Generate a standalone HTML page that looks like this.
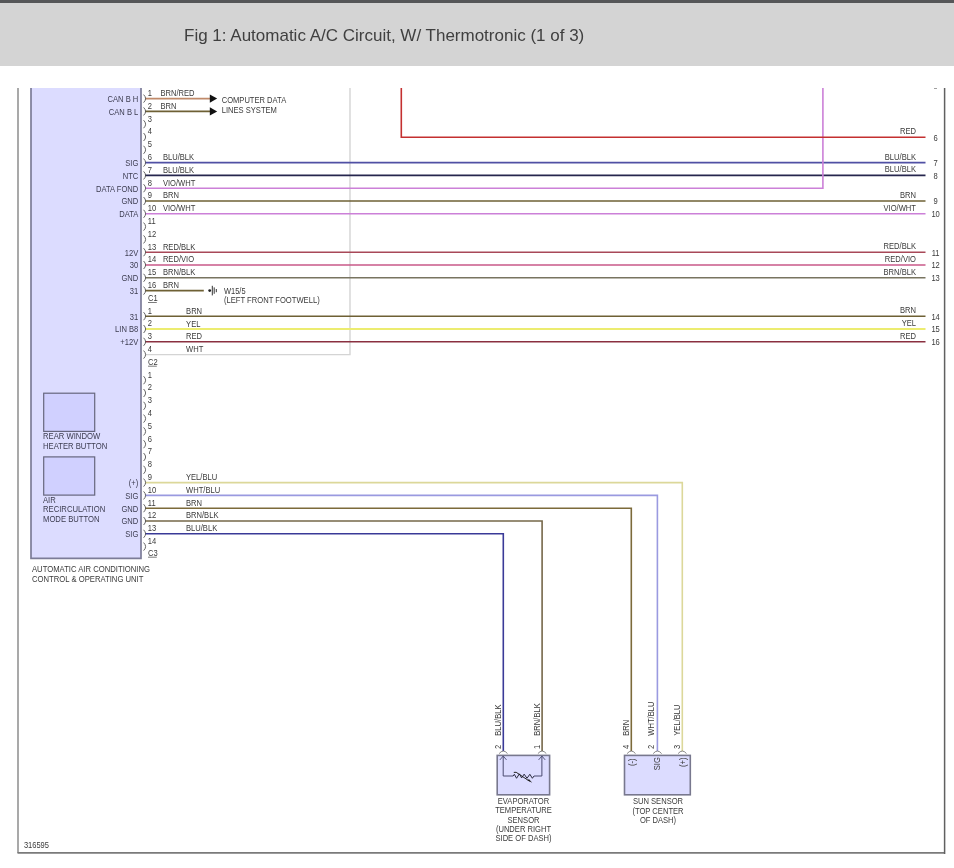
<!DOCTYPE html>
<html><head><meta charset="utf-8"><style>
html,body{margin:0;padding:0;background:#fff;width:954px;height:868px;overflow:hidden}
.hdr{position:absolute;left:0;top:0;width:954px;height:66px;background:#d4d4d4;border-top:3px solid #555658;box-sizing:border-box}
.hdr span{position:absolute;left:184px;top:22.8px;will-change:transform;font:17px "Liberation Sans",sans-serif;color:#404040;white-space:nowrap}
svg{position:absolute;left:0;top:0;will-change:transform}
text{font-family:"Liberation Sans",sans-serif}
</style></head><body>
<div class="hdr"><span>Fig 1: Automatic A/C Circuit, W/ Thermotronic (1 of 3)</span></div>
<svg width="954" height="868" viewBox="0 0 954 868">
<line x1="18.0" y1="88.0" x2="18.0" y2="853.0" stroke="#a0a0a0" stroke-width="1.8"/>
<line x1="17.5" y1="852.9" x2="944.6" y2="852.9" stroke="#7a7a7a" stroke-width="1.6"/>
<line x1="944.6" y1="88.0" x2="944.6" y2="853.9" stroke="#606060" stroke-width="1.5"/>
<polyline points="350.0,88.0 350.0,354.6 145.0,354.6" fill="none" stroke="#d4d4d4" stroke-width="1.4" stroke-linejoin="miter"/>
<path d="M31,88 V558.4 H141 V88" fill="#dcdcff" stroke="#7c7c98" stroke-width="1.7"/>
<rect x="43.7" y="393.2" width="51.0" height="38.2" fill="#d0d0ff" stroke="#66667e" stroke-width="1.2"/>
<rect x="43.7" y="456.9" width="51.0" height="38.2" fill="#d0d0ff" stroke="#66667e" stroke-width="1.2"/>
<line x1="145.0" y1="98.6" x2="210.0" y2="98.6" stroke="#c08a6a" stroke-width="1.6"/>
<line x1="145.0" y1="111.4" x2="210.0" y2="111.4" stroke="#6e6034" stroke-width="1.6"/>
<line x1="145.0" y1="162.6" x2="925.5" y2="162.6" stroke="#5050a4" stroke-width="1.6"/>
<line x1="145.0" y1="175.4" x2="925.5" y2="175.4" stroke="#26264e" stroke-width="1.6"/>
<polyline points="145.0,188.2 822.9,188.2 822.9,88.0" fill="none" stroke="#cc80d8" stroke-width="1.6" stroke-linejoin="miter"/>
<line x1="145.0" y1="201.0" x2="925.5" y2="201.0" stroke="#6e6034" stroke-width="1.6"/>
<line x1="145.0" y1="213.8" x2="925.5" y2="213.8" stroke="#cc80d8" stroke-width="1.6"/>
<line x1="145.0" y1="252.2" x2="925.5" y2="252.2" stroke="#a84858" stroke-width="1.6"/>
<line x1="145.0" y1="265.0" x2="925.5" y2="265.0" stroke="#c85888" stroke-width="1.6"/>
<line x1="145.0" y1="277.8" x2="925.5" y2="277.8" stroke="#787460" stroke-width="1.6"/>
<line x1="145.0" y1="290.6" x2="203.8" y2="290.6" stroke="#6e6034" stroke-width="1.6"/>
<polyline points="401.3,88.0 401.3,137.3 925.5,137.3" fill="none" stroke="#c43030" stroke-width="1.6" stroke-linejoin="miter"/>
<line x1="145.0" y1="316.2" x2="925.5" y2="316.2" stroke="#6e6034" stroke-width="1.6"/>
<line x1="145.0" y1="329.0" x2="925.5" y2="329.0" stroke="#ecec70" stroke-width="1.9"/>
<line x1="145.0" y1="341.8" x2="925.5" y2="341.8" stroke="#8a3040" stroke-width="1.6"/>
<polyline points="145.0,482.6 682.3,482.6 682.3,751.0" fill="none" stroke="#dcd89a" stroke-width="1.6" stroke-linejoin="miter"/>
<polyline points="145.0,495.4 657.4,495.4 657.4,751.0" fill="none" stroke="#9a9ae0" stroke-width="1.6" stroke-linejoin="miter"/>
<polyline points="145.0,508.2 631.3,508.2 631.3,751.0" fill="none" stroke="#7c6a3a" stroke-width="1.6" stroke-linejoin="miter"/>
<polyline points="145.0,521.0 542.1,521.0 542.1,751.0" fill="none" stroke="#76684a" stroke-width="1.6" stroke-linejoin="miter"/>
<polyline points="145.0,533.8 503.3,533.8 503.3,751.0" fill="none" stroke="#3a3a98" stroke-width="1.6" stroke-linejoin="miter"/>
<polygon points="209.8,94.4 217.2,98.6 209.8,102.8" fill="#111"/>
<polygon points="209.8,107.2 217.2,111.4 209.8,115.6" fill="#111"/>
<text x="221.7" y="102.9" font-size="8.2" fill="#3a3a3a" text-anchor="start" textLength="64.50" lengthAdjust="spacingAndGlyphs">COMPUTER DATA</text>
<text x="221.7" y="112.7" font-size="8.2" fill="#3a3a3a" text-anchor="start" textLength="55.22" lengthAdjust="spacingAndGlyphs">LINES SYSTEM</text>
<circle cx="209.7" cy="290.6" r="1.4" fill="#222"/>
<line x1="212.3" y1="285.8" x2="212.3" y2="295.4" stroke="#333" stroke-width="1.0"/>
<line x1="214.2" y1="287.4" x2="214.2" y2="293.8" stroke="#333" stroke-width="1.0"/>
<line x1="216.3" y1="289.0" x2="216.3" y2="292.2" stroke="#333" stroke-width="1.0"/>
<text x="224.0" y="293.5" font-size="8.2" fill="#3a3a3a" text-anchor="start" textLength="21.60" lengthAdjust="spacingAndGlyphs">W15/5</text>
<text x="224.0" y="302.7" font-size="8.2" fill="#3a3a3a" text-anchor="start" textLength="95.70" lengthAdjust="spacingAndGlyphs">(LEFT FRONT FOOTWELL)</text>
<path d="M143.6,94.6 Q147.6,98.6 143.6,102.6" fill="none" stroke="#555" stroke-width="0.9"/>
<text x="147.8" y="96.0" font-size="8.2" fill="#3a3a3a" text-anchor="start" textLength="4.22" lengthAdjust="spacingAndGlyphs">1</text>
<path d="M143.6,107.4 Q147.6,111.4 143.6,115.4" fill="none" stroke="#555" stroke-width="0.9"/>
<text x="147.8" y="108.8" font-size="8.2" fill="#3a3a3a" text-anchor="start" textLength="4.22" lengthAdjust="spacingAndGlyphs">2</text>
<path d="M143.6,120.2 Q147.6,124.2 143.6,128.2" fill="none" stroke="#555" stroke-width="0.9"/>
<text x="147.8" y="121.6" font-size="8.2" fill="#3a3a3a" text-anchor="start" textLength="4.22" lengthAdjust="spacingAndGlyphs">3</text>
<path d="M143.6,133.0 Q147.6,137.0 143.6,141.0" fill="none" stroke="#555" stroke-width="0.9"/>
<text x="147.8" y="134.4" font-size="8.2" fill="#3a3a3a" text-anchor="start" textLength="4.22" lengthAdjust="spacingAndGlyphs">4</text>
<path d="M143.6,145.8 Q147.6,149.8 143.6,153.8" fill="none" stroke="#555" stroke-width="0.9"/>
<text x="147.8" y="147.2" font-size="8.2" fill="#3a3a3a" text-anchor="start" textLength="4.22" lengthAdjust="spacingAndGlyphs">5</text>
<path d="M143.6,158.6 Q147.6,162.6 143.6,166.6" fill="none" stroke="#555" stroke-width="0.9"/>
<text x="147.8" y="160.0" font-size="8.2" fill="#3a3a3a" text-anchor="start" textLength="4.22" lengthAdjust="spacingAndGlyphs">6</text>
<path d="M143.6,171.4 Q147.6,175.4 143.6,179.4" fill="none" stroke="#555" stroke-width="0.9"/>
<text x="147.8" y="172.8" font-size="8.2" fill="#3a3a3a" text-anchor="start" textLength="4.22" lengthAdjust="spacingAndGlyphs">7</text>
<path d="M143.6,184.2 Q147.6,188.2 143.6,192.2" fill="none" stroke="#555" stroke-width="0.9"/>
<text x="147.8" y="185.6" font-size="8.2" fill="#3a3a3a" text-anchor="start" textLength="4.22" lengthAdjust="spacingAndGlyphs">8</text>
<path d="M143.6,197.0 Q147.6,201.0 143.6,205.0" fill="none" stroke="#555" stroke-width="0.9"/>
<text x="147.8" y="198.4" font-size="8.2" fill="#3a3a3a" text-anchor="start" textLength="4.22" lengthAdjust="spacingAndGlyphs">9</text>
<path d="M143.6,209.8 Q147.6,213.8 143.6,217.8" fill="none" stroke="#555" stroke-width="0.9"/>
<text x="147.8" y="211.2" font-size="8.2" fill="#3a3a3a" text-anchor="start" textLength="8.44" lengthAdjust="spacingAndGlyphs">10</text>
<path d="M143.6,222.6 Q147.6,226.6 143.6,230.6" fill="none" stroke="#555" stroke-width="0.9"/>
<text x="147.8" y="224.0" font-size="8.2" fill="#3a3a3a" text-anchor="start" textLength="7.87" lengthAdjust="spacingAndGlyphs">11</text>
<path d="M143.6,235.4 Q147.6,239.4 143.6,243.4" fill="none" stroke="#555" stroke-width="0.9"/>
<text x="147.8" y="236.8" font-size="8.2" fill="#3a3a3a" text-anchor="start" textLength="8.44" lengthAdjust="spacingAndGlyphs">12</text>
<path d="M143.6,248.2 Q147.6,252.2 143.6,256.2" fill="none" stroke="#555" stroke-width="0.9"/>
<text x="147.8" y="249.6" font-size="8.2" fill="#3a3a3a" text-anchor="start" textLength="8.44" lengthAdjust="spacingAndGlyphs">13</text>
<path d="M143.6,261.0 Q147.6,265.0 143.6,269.0" fill="none" stroke="#555" stroke-width="0.9"/>
<text x="147.8" y="262.4" font-size="8.2" fill="#3a3a3a" text-anchor="start" textLength="8.44" lengthAdjust="spacingAndGlyphs">14</text>
<path d="M143.6,273.8 Q147.6,277.8 143.6,281.8" fill="none" stroke="#555" stroke-width="0.9"/>
<text x="147.8" y="275.2" font-size="8.2" fill="#3a3a3a" text-anchor="start" textLength="8.44" lengthAdjust="spacingAndGlyphs">15</text>
<path d="M143.6,286.6 Q147.6,290.6 143.6,294.6" fill="none" stroke="#555" stroke-width="0.9"/>
<text x="147.8" y="288.0" font-size="8.2" fill="#3a3a3a" text-anchor="start" textLength="8.44" lengthAdjust="spacingAndGlyphs">16</text>
<path d="M143.6,312.2 Q147.6,316.2 143.6,320.2" fill="none" stroke="#555" stroke-width="0.9"/>
<text x="147.8" y="313.6" font-size="8.2" fill="#3a3a3a" text-anchor="start" textLength="4.22" lengthAdjust="spacingAndGlyphs">1</text>
<path d="M143.6,325.0 Q147.6,329.0 143.6,333.0" fill="none" stroke="#555" stroke-width="0.9"/>
<text x="147.8" y="326.4" font-size="8.2" fill="#3a3a3a" text-anchor="start" textLength="4.22" lengthAdjust="spacingAndGlyphs">2</text>
<path d="M143.6,337.8 Q147.6,341.8 143.6,345.8" fill="none" stroke="#555" stroke-width="0.9"/>
<text x="147.8" y="339.2" font-size="8.2" fill="#3a3a3a" text-anchor="start" textLength="4.22" lengthAdjust="spacingAndGlyphs">3</text>
<path d="M143.6,350.6 Q147.6,354.6 143.6,358.6" fill="none" stroke="#555" stroke-width="0.9"/>
<text x="147.8" y="352.0" font-size="8.2" fill="#3a3a3a" text-anchor="start" textLength="4.22" lengthAdjust="spacingAndGlyphs">4</text>
<path d="M143.6,376.2 Q147.6,380.2 143.6,384.2" fill="none" stroke="#555" stroke-width="0.9"/>
<text x="147.8" y="377.6" font-size="8.2" fill="#3a3a3a" text-anchor="start" textLength="4.22" lengthAdjust="spacingAndGlyphs">1</text>
<path d="M143.6,389.0 Q147.6,393.0 143.6,397.0" fill="none" stroke="#555" stroke-width="0.9"/>
<text x="147.8" y="390.4" font-size="8.2" fill="#3a3a3a" text-anchor="start" textLength="4.22" lengthAdjust="spacingAndGlyphs">2</text>
<path d="M143.6,401.8 Q147.6,405.8 143.6,409.8" fill="none" stroke="#555" stroke-width="0.9"/>
<text x="147.8" y="403.2" font-size="8.2" fill="#3a3a3a" text-anchor="start" textLength="4.22" lengthAdjust="spacingAndGlyphs">3</text>
<path d="M143.6,414.6 Q147.6,418.6 143.6,422.6" fill="none" stroke="#555" stroke-width="0.9"/>
<text x="147.8" y="416.0" font-size="8.2" fill="#3a3a3a" text-anchor="start" textLength="4.22" lengthAdjust="spacingAndGlyphs">4</text>
<path d="M143.6,427.4 Q147.6,431.4 143.6,435.4" fill="none" stroke="#555" stroke-width="0.9"/>
<text x="147.8" y="428.8" font-size="8.2" fill="#3a3a3a" text-anchor="start" textLength="4.22" lengthAdjust="spacingAndGlyphs">5</text>
<path d="M143.6,440.2 Q147.6,444.2 143.6,448.2" fill="none" stroke="#555" stroke-width="0.9"/>
<text x="147.8" y="441.6" font-size="8.2" fill="#3a3a3a" text-anchor="start" textLength="4.22" lengthAdjust="spacingAndGlyphs">6</text>
<path d="M143.6,453.0 Q147.6,457.0 143.6,461.0" fill="none" stroke="#555" stroke-width="0.9"/>
<text x="147.8" y="454.4" font-size="8.2" fill="#3a3a3a" text-anchor="start" textLength="4.22" lengthAdjust="spacingAndGlyphs">7</text>
<path d="M143.6,465.8 Q147.6,469.8 143.6,473.8" fill="none" stroke="#555" stroke-width="0.9"/>
<text x="147.8" y="467.2" font-size="8.2" fill="#3a3a3a" text-anchor="start" textLength="4.22" lengthAdjust="spacingAndGlyphs">8</text>
<path d="M143.6,478.6 Q147.6,482.6 143.6,486.6" fill="none" stroke="#555" stroke-width="0.9"/>
<text x="147.8" y="480.0" font-size="8.2" fill="#3a3a3a" text-anchor="start" textLength="4.22" lengthAdjust="spacingAndGlyphs">9</text>
<path d="M143.6,491.4 Q147.6,495.4 143.6,499.4" fill="none" stroke="#555" stroke-width="0.9"/>
<text x="147.8" y="492.8" font-size="8.2" fill="#3a3a3a" text-anchor="start" textLength="8.44" lengthAdjust="spacingAndGlyphs">10</text>
<path d="M143.6,504.2 Q147.6,508.2 143.6,512.2" fill="none" stroke="#555" stroke-width="0.9"/>
<text x="147.8" y="505.6" font-size="8.2" fill="#3a3a3a" text-anchor="start" textLength="7.87" lengthAdjust="spacingAndGlyphs">11</text>
<path d="M143.6,517.0 Q147.6,521.0 143.6,525.0" fill="none" stroke="#555" stroke-width="0.9"/>
<text x="147.8" y="518.4" font-size="8.2" fill="#3a3a3a" text-anchor="start" textLength="8.44" lengthAdjust="spacingAndGlyphs">12</text>
<path d="M143.6,529.8 Q147.6,533.8 143.6,537.8" fill="none" stroke="#555" stroke-width="0.9"/>
<text x="147.8" y="531.2" font-size="8.2" fill="#3a3a3a" text-anchor="start" textLength="8.44" lengthAdjust="spacingAndGlyphs">13</text>
<path d="M143.6,542.6 Q147.6,546.6 143.6,550.6" fill="none" stroke="#555" stroke-width="0.9"/>
<text x="147.8" y="544.0" font-size="8.2" fill="#3a3a3a" text-anchor="start" textLength="8.44" lengthAdjust="spacingAndGlyphs">14</text>
<text x="148.0" y="301.3" font-size="8.2" fill="#3a3a3a" text-anchor="start" textLength="9.70" lengthAdjust="spacingAndGlyphs">C1</text>
<line x1="148.0" y1="302.5" x2="156.8" y2="302.5" stroke="#444" stroke-width="0.7"/>
<text x="148.0" y="365.0" font-size="8.2" fill="#3a3a3a" text-anchor="start" textLength="9.70" lengthAdjust="spacingAndGlyphs">C2</text>
<line x1="148.0" y1="366.2" x2="156.8" y2="366.2" stroke="#444" stroke-width="0.7"/>
<text x="148.0" y="556.0" font-size="8.2" fill="#3a3a3a" text-anchor="start" textLength="9.70" lengthAdjust="spacingAndGlyphs">C3</text>
<line x1="148.0" y1="557.2" x2="156.8" y2="557.2" stroke="#444" stroke-width="0.7"/>
<text x="160.4" y="95.9" font-size="8.2" fill="#3a3a3a" text-anchor="start" textLength="34.14" lengthAdjust="spacingAndGlyphs">BRN/RED</text>
<text x="160.4" y="108.7" font-size="8.2" fill="#3a3a3a" text-anchor="start" textLength="16.01" lengthAdjust="spacingAndGlyphs">BRN</text>
<text x="162.9" y="159.9" font-size="8.2" fill="#3a3a3a" text-anchor="start" textLength="31.20" lengthAdjust="spacingAndGlyphs">BLU/BLK</text>
<text x="162.9" y="172.7" font-size="8.2" fill="#3a3a3a" text-anchor="start" textLength="31.20" lengthAdjust="spacingAndGlyphs">BLU/BLK</text>
<text x="162.9" y="185.5" font-size="8.2" fill="#3a3a3a" text-anchor="start" textLength="32.44" lengthAdjust="spacingAndGlyphs">VIO/WHT</text>
<text x="162.9" y="198.3" font-size="8.2" fill="#3a3a3a" text-anchor="start" textLength="16.01" lengthAdjust="spacingAndGlyphs">BRN</text>
<text x="162.9" y="211.1" font-size="8.2" fill="#3a3a3a" text-anchor="start" textLength="32.44" lengthAdjust="spacingAndGlyphs">VIO/WHT</text>
<text x="162.9" y="249.5" font-size="8.2" fill="#3a3a3a" text-anchor="start" textLength="32.46" lengthAdjust="spacingAndGlyphs">RED/BLK</text>
<text x="162.9" y="262.3" font-size="8.2" fill="#3a3a3a" text-anchor="start" textLength="31.19" lengthAdjust="spacingAndGlyphs">RED/VIO</text>
<text x="162.9" y="275.1" font-size="8.2" fill="#3a3a3a" text-anchor="start" textLength="32.46" lengthAdjust="spacingAndGlyphs">BRN/BLK</text>
<text x="162.9" y="287.9" font-size="8.2" fill="#3a3a3a" text-anchor="start" textLength="16.01" lengthAdjust="spacingAndGlyphs">BRN</text>
<text x="186.1" y="313.7" font-size="8.2" fill="#3a3a3a" text-anchor="start" textLength="16.01" lengthAdjust="spacingAndGlyphs">BRN</text>
<text x="186.1" y="326.5" font-size="8.2" fill="#3a3a3a" text-anchor="start" textLength="14.34" lengthAdjust="spacingAndGlyphs">YEL</text>
<text x="186.1" y="339.3" font-size="8.2" fill="#3a3a3a" text-anchor="start" textLength="16.01" lengthAdjust="spacingAndGlyphs">RED</text>
<text x="186.1" y="352.1" font-size="8.2" fill="#3a3a3a" text-anchor="start" textLength="17.27" lengthAdjust="spacingAndGlyphs">WHT</text>
<text x="186.0" y="479.9" font-size="8.2" fill="#3a3a3a" text-anchor="start" textLength="31.20" lengthAdjust="spacingAndGlyphs">YEL/BLU</text>
<text x="186.0" y="492.7" font-size="8.2" fill="#3a3a3a" text-anchor="start" textLength="34.13" lengthAdjust="spacingAndGlyphs">WHT/BLU</text>
<text x="186.0" y="505.5" font-size="8.2" fill="#3a3a3a" text-anchor="start" textLength="16.01" lengthAdjust="spacingAndGlyphs">BRN</text>
<text x="186.0" y="518.3" font-size="8.2" fill="#3a3a3a" text-anchor="start" textLength="32.46" lengthAdjust="spacingAndGlyphs">BRN/BLK</text>
<text x="186.0" y="531.1" font-size="8.2" fill="#3a3a3a" text-anchor="start" textLength="31.20" lengthAdjust="spacingAndGlyphs">BLU/BLK</text>
<text x="138.3" y="102.0" font-size="8.2" fill="#3c3c50" text-anchor="end" textLength="30.77" lengthAdjust="spacingAndGlyphs">CAN B H</text>
<text x="138.3" y="114.8" font-size="8.2" fill="#3c3c50" text-anchor="end" textLength="29.51" lengthAdjust="spacingAndGlyphs">CAN B L</text>
<text x="138.3" y="166.0" font-size="8.2" fill="#3c3c50" text-anchor="end" textLength="13.07" lengthAdjust="spacingAndGlyphs">SIG</text>
<text x="138.3" y="178.8" font-size="8.2" fill="#3c3c50" text-anchor="end" textLength="15.59" lengthAdjust="spacingAndGlyphs">NTC</text>
<text x="138.3" y="191.6" font-size="8.2" fill="#3c3c50" text-anchor="end" textLength="42.28" lengthAdjust="spacingAndGlyphs">DATA FOND</text>
<text x="138.3" y="204.4" font-size="8.2" fill="#3c3c50" text-anchor="end" textLength="16.86" lengthAdjust="spacingAndGlyphs">GND</text>
<text x="138.3" y="217.2" font-size="8.2" fill="#3c3c50" text-anchor="end" textLength="19.10" lengthAdjust="spacingAndGlyphs">DATA</text>
<text x="138.3" y="255.6" font-size="8.2" fill="#3c3c50" text-anchor="end" textLength="13.50" lengthAdjust="spacingAndGlyphs">12V</text>
<text x="138.3" y="268.4" font-size="8.2" fill="#3c3c50" text-anchor="end" textLength="8.44" lengthAdjust="spacingAndGlyphs">30</text>
<text x="138.3" y="281.2" font-size="8.2" fill="#3c3c50" text-anchor="end" textLength="16.86" lengthAdjust="spacingAndGlyphs">GND</text>
<text x="138.3" y="294.0" font-size="8.2" fill="#3c3c50" text-anchor="end" textLength="8.44" lengthAdjust="spacingAndGlyphs">31</text>
<text x="138.3" y="319.6" font-size="8.2" fill="#3c3c50" text-anchor="end" textLength="8.44" lengthAdjust="spacingAndGlyphs">31</text>
<text x="138.3" y="332.4" font-size="8.2" fill="#3c3c50" text-anchor="end" textLength="23.19" lengthAdjust="spacingAndGlyphs">LIN B8</text>
<text x="138.3" y="345.2" font-size="8.2" fill="#3c3c50" text-anchor="end" textLength="17.93" lengthAdjust="spacingAndGlyphs">+12V</text>
<text x="138.3" y="486.0" font-size="8.2" fill="#3c3c50" text-anchor="end" textLength="9.48" lengthAdjust="spacingAndGlyphs">(+)</text>
<text x="138.3" y="498.8" font-size="8.2" fill="#3c3c50" text-anchor="end" textLength="13.07" lengthAdjust="spacingAndGlyphs">SIG</text>
<text x="138.3" y="511.6" font-size="8.2" fill="#3c3c50" text-anchor="end" textLength="16.86" lengthAdjust="spacingAndGlyphs">GND</text>
<text x="138.3" y="524.4" font-size="8.2" fill="#3c3c50" text-anchor="end" textLength="16.86" lengthAdjust="spacingAndGlyphs">GND</text>
<text x="138.3" y="537.2" font-size="8.2" fill="#3c3c50" text-anchor="end" textLength="13.07" lengthAdjust="spacingAndGlyphs">SIG</text>
<text x="43.0" y="438.9" font-size="8.2" fill="#3c3c50" text-anchor="start" textLength="57.19" lengthAdjust="spacingAndGlyphs">REAR WINDOW</text>
<text x="43.0" y="449.0" font-size="8.2" fill="#3c3c50" text-anchor="start" textLength="64.18" lengthAdjust="spacingAndGlyphs">HEATER BUTTON</text>
<text x="43.0" y="502.6" font-size="8.2" fill="#3c3c50" text-anchor="start" textLength="12.81" lengthAdjust="spacingAndGlyphs">AIR</text>
<text x="43.0" y="511.8" font-size="8.2" fill="#3c3c50" text-anchor="start" textLength="62.18" lengthAdjust="spacingAndGlyphs">RECIRCULATION</text>
<text x="43.0" y="521.5" font-size="8.2" fill="#3c3c50" text-anchor="start" textLength="56.63" lengthAdjust="spacingAndGlyphs">MODE BUTTON</text>
<text x="32.0" y="572.2" font-size="8.2" fill="#3a3a3a" text-anchor="start" textLength="117.96" lengthAdjust="spacingAndGlyphs">AUTOMATIC AIR CONDITIONING</text>
<text x="32.0" y="582.0" font-size="8.2" fill="#3a3a3a" text-anchor="start" textLength="111.42" lengthAdjust="spacingAndGlyphs">CONTROL &amp; OPERATING UNIT</text>
<text x="916.0" y="134.2" font-size="8.2" fill="#3a3a3a" text-anchor="end" textLength="16.01" lengthAdjust="spacingAndGlyphs">RED</text>
<text x="935.6" y="140.6" font-size="8.2" fill="#3a3a3a" text-anchor="middle" textLength="4.22" lengthAdjust="spacingAndGlyphs">6</text>
<text x="916.0" y="159.5" font-size="8.2" fill="#3a3a3a" text-anchor="end" textLength="31.20" lengthAdjust="spacingAndGlyphs">BLU/BLK</text>
<text x="935.6" y="165.9" font-size="8.2" fill="#3a3a3a" text-anchor="middle" textLength="4.22" lengthAdjust="spacingAndGlyphs">7</text>
<text x="916.0" y="172.3" font-size="8.2" fill="#3a3a3a" text-anchor="end" textLength="31.20" lengthAdjust="spacingAndGlyphs">BLU/BLK</text>
<text x="935.6" y="178.7" font-size="8.2" fill="#3a3a3a" text-anchor="middle" textLength="4.22" lengthAdjust="spacingAndGlyphs">8</text>
<text x="916.0" y="197.9" font-size="8.2" fill="#3a3a3a" text-anchor="end" textLength="16.01" lengthAdjust="spacingAndGlyphs">BRN</text>
<text x="935.6" y="204.3" font-size="8.2" fill="#3a3a3a" text-anchor="middle" textLength="4.22" lengthAdjust="spacingAndGlyphs">9</text>
<text x="916.0" y="210.7" font-size="8.2" fill="#3a3a3a" text-anchor="end" textLength="32.44" lengthAdjust="spacingAndGlyphs">VIO/WHT</text>
<text x="935.6" y="217.1" font-size="8.2" fill="#3a3a3a" text-anchor="middle" textLength="8.44" lengthAdjust="spacingAndGlyphs">10</text>
<text x="916.0" y="249.1" font-size="8.2" fill="#3a3a3a" text-anchor="end" textLength="32.46" lengthAdjust="spacingAndGlyphs">RED/BLK</text>
<text x="935.6" y="255.5" font-size="8.2" fill="#3a3a3a" text-anchor="middle" textLength="7.87" lengthAdjust="spacingAndGlyphs">11</text>
<text x="916.0" y="261.9" font-size="8.2" fill="#3a3a3a" text-anchor="end" textLength="31.19" lengthAdjust="spacingAndGlyphs">RED/VIO</text>
<text x="935.6" y="268.3" font-size="8.2" fill="#3a3a3a" text-anchor="middle" textLength="8.44" lengthAdjust="spacingAndGlyphs">12</text>
<text x="916.0" y="274.7" font-size="8.2" fill="#3a3a3a" text-anchor="end" textLength="32.46" lengthAdjust="spacingAndGlyphs">BRN/BLK</text>
<text x="935.6" y="281.1" font-size="8.2" fill="#3a3a3a" text-anchor="middle" textLength="8.44" lengthAdjust="spacingAndGlyphs">13</text>
<text x="916.0" y="313.1" font-size="8.2" fill="#3a3a3a" text-anchor="end" textLength="16.01" lengthAdjust="spacingAndGlyphs">BRN</text>
<text x="935.6" y="319.5" font-size="8.2" fill="#3a3a3a" text-anchor="middle" textLength="8.44" lengthAdjust="spacingAndGlyphs">14</text>
<text x="916.0" y="325.9" font-size="8.2" fill="#3a3a3a" text-anchor="end" textLength="14.34" lengthAdjust="spacingAndGlyphs">YEL</text>
<text x="935.6" y="332.3" font-size="8.2" fill="#3a3a3a" text-anchor="middle" textLength="8.44" lengthAdjust="spacingAndGlyphs">15</text>
<text x="916.0" y="338.7" font-size="8.2" fill="#3a3a3a" text-anchor="end" textLength="16.01" lengthAdjust="spacingAndGlyphs">RED</text>
<text x="935.6" y="345.1" font-size="8.2" fill="#3a3a3a" text-anchor="middle" textLength="8.44" lengthAdjust="spacingAndGlyphs">16</text>
<line x1="934.0" y1="88.5" x2="937.0" y2="88.5" stroke="#888" stroke-width="0.8"/>
<rect x="497.2" y="755.4" width="52.4" height="39.4" fill="#dcdcff" stroke="#78788e" stroke-width="1.6"/>
<rect x="624.5" y="755.4" width="65.8" height="39.4" fill="#dcdcff" stroke="#78788e" stroke-width="1.6"/>
<path d="M499.1,753.6 Q503.3,748.5 507.5,753.6" fill="none" stroke="#666" stroke-width="0.8"/>
<path d="M537.9,753.6 Q542.1,748.5 546.3,753.6" fill="none" stroke="#666" stroke-width="0.8"/>
<path d="M627.1,753.6 Q631.3,748.5 635.5,753.6" fill="none" stroke="#666" stroke-width="0.8"/>
<path d="M653.2,753.6 Q657.4,748.5 661.6,753.6" fill="none" stroke="#666" stroke-width="0.8"/>
<path d="M678.1,753.6 Q682.3,748.5 686.5,753.6" fill="none" stroke="#666" stroke-width="0.8"/>
<polyline points="503.2,756.2 503.2,776.0 513.1,776.0" fill="none" stroke="#4a4a70" stroke-width="1.0" stroke-linejoin="miter"/>
<polyline points="541.9,756.2 541.9,776.0 534.0,776.0" fill="none" stroke="#4a4a70" stroke-width="1.0" stroke-linejoin="miter"/>
<polyline points="513.06,776.05 514.33,774.28 516.55,778.27 519.40,773.83 521.62,777.95 524.15,774.15 527.0,778.27 529.85,774.28 532.39,778.27 533.97,776.05" fill="none" stroke="#2a2a40" stroke-width="1.0"/>
<polyline points="513.8,772.4 516.2,772.3 529.5,781.2" fill="none" stroke="#222" stroke-width="1.0"/>
<polygon points="527.6,780.4 532.2,782.8 528.9,778.9" fill="#222"/>
<polyline points="499.9,759.9 503.2,756.0 506.5,759.9" fill="none" stroke="#4a4a70" stroke-width="0.9"/>
<polyline points="538.6,759.9 541.9,756.0 545.2,759.9" fill="none" stroke="#4a4a70" stroke-width="0.9"/>
<text transform="translate(501.2,735.7) rotate(-90)" font-size="8.2" fill="#3a3a3a" textLength="31.20" lengthAdjust="spacingAndGlyphs">BLU/BLK</text>
<text transform="translate(501.2,749.0) rotate(-90)" font-size="8.2" fill="#3a3a3a" textLength="4.22" lengthAdjust="spacingAndGlyphs">2</text>
<text transform="translate(539.5,735.7) rotate(-90)" font-size="8.2" fill="#3a3a3a" textLength="32.46" lengthAdjust="spacingAndGlyphs">BRN/BLK</text>
<text transform="translate(539.5,749.0) rotate(-90)" font-size="8.2" fill="#3a3a3a" textLength="4.22" lengthAdjust="spacingAndGlyphs">1</text>
<text transform="translate(629.0,735.7) rotate(-90)" font-size="8.2" fill="#3a3a3a" textLength="16.01" lengthAdjust="spacingAndGlyphs">BRN</text>
<text transform="translate(629.0,749.0) rotate(-90)" font-size="8.2" fill="#3a3a3a" textLength="4.22" lengthAdjust="spacingAndGlyphs">4</text>
<text transform="translate(654.2,735.7) rotate(-90)" font-size="8.2" fill="#3a3a3a" textLength="34.13" lengthAdjust="spacingAndGlyphs">WHT/BLU</text>
<text transform="translate(654.2,749.0) rotate(-90)" font-size="8.2" fill="#3a3a3a" textLength="4.22" lengthAdjust="spacingAndGlyphs">2</text>
<text transform="translate(680.0,735.7) rotate(-90)" font-size="8.2" fill="#3a3a3a" textLength="31.20" lengthAdjust="spacingAndGlyphs">YEL/BLU</text>
<text transform="translate(680.0,749.0) rotate(-90)" font-size="8.2" fill="#3a3a3a" textLength="4.22" lengthAdjust="spacingAndGlyphs">3</text>
<text transform="translate(634.8,766.0) rotate(-90)" font-size="8.2" fill="#3a3a3a" textLength="7.58" lengthAdjust="spacingAndGlyphs">(-)</text>
<text transform="translate(660.3,770.2) rotate(-90)" font-size="8.2" fill="#3a3a3a" textLength="13.07" lengthAdjust="spacingAndGlyphs">SIG</text>
<text transform="translate(685.8,767.0) rotate(-90)" font-size="8.2" fill="#3a3a3a" textLength="9.48" lengthAdjust="spacingAndGlyphs">(+)</text>
<text x="523.5" y="804.0" font-size="8.2" fill="#3a3a3a" text-anchor="middle" textLength="51.42" lengthAdjust="spacingAndGlyphs">EVAPORATOR</text>
<text x="523.5" y="813.4" font-size="8.2" fill="#3a3a3a" text-anchor="middle" textLength="56.75" lengthAdjust="spacingAndGlyphs">TEMPERATURE</text>
<text x="523.5" y="822.8" font-size="8.2" fill="#3a3a3a" text-anchor="middle" textLength="32.03" lengthAdjust="spacingAndGlyphs">SENSOR</text>
<text x="523.5" y="832.2" font-size="8.2" fill="#3a3a3a" text-anchor="middle" textLength="55.20" lengthAdjust="spacingAndGlyphs">(UNDER RIGHT</text>
<text x="523.5" y="841.4" font-size="8.2" fill="#3a3a3a" text-anchor="middle" textLength="56.05" lengthAdjust="spacingAndGlyphs">SIDE OF DASH)</text>
<text x="658.0" y="804.0" font-size="8.2" fill="#3a3a3a" text-anchor="middle" textLength="50.15" lengthAdjust="spacingAndGlyphs">SUN SENSOR</text>
<text x="658.0" y="813.5" font-size="8.2" fill="#3a3a3a" text-anchor="middle" textLength="51.14" lengthAdjust="spacingAndGlyphs">(TOP CENTER</text>
<text x="658.0" y="823.0" font-size="8.2" fill="#3a3a3a" text-anchor="middle" textLength="36.24" lengthAdjust="spacingAndGlyphs">OF DASH)</text>
<text x="23.9" y="847.9" font-size="8.2" fill="#3a3a3a" text-anchor="start" textLength="25.10" lengthAdjust="spacingAndGlyphs">316595</text>
</svg>
</body></html>
